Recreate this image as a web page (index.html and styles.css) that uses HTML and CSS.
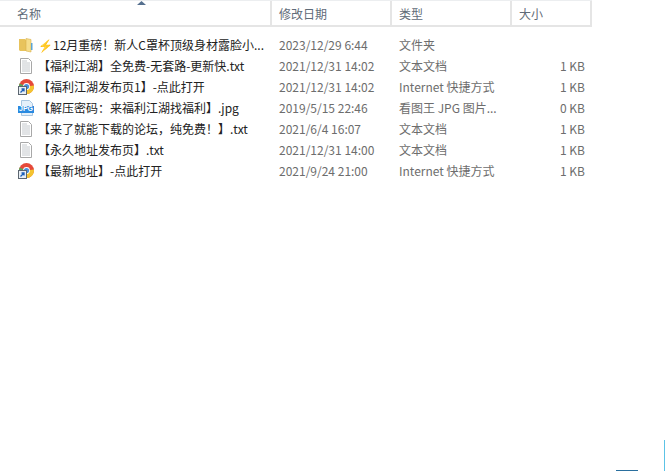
FILE: index.html
```html
<!DOCTYPE html>
<html lang="zh-CN">
<head>
  <meta charset="UTF-8">
  <meta name="viewport" content="width=device-width, initial-scale=1.0">
  <title>文件列表</title>
  <link rel="stylesheet" href="styles.css">
</head>
<body>
  <svg width="0" height="0" class="defs">
    <symbol id="ico-folder" viewBox="0 0 16 16">
      <path d="M1 2h6l1 1v11H2l-1-1z" fill="#e8c35c"/>
      <path d="M8 1.5l5 1V15l-5-1z" fill="#f6dd8a" stroke="#d9b04a" stroke-width=".6"/>
      <path d="M13 6h1.5v7H13z" fill="#5aa5d8"/>
    </symbol>
    <symbol id="ico-txt" viewBox="0 0 16 16">
      <path d="M2.5.5h8l3 3v12h-11z" fill="#fff" stroke="#a8a8a8"/>
      <path d="M4 5h8M4 7h8M4 9h8M4 11h8M4 13h8" stroke="#c4c8cc"/>
      <path d="M4 3h5" stroke="#c4c8cc"/>
    </symbol>
    <symbol id="ico-link" viewBox="0 0 16 16">
      <circle cx="8.5" cy="7.5" r="7.5" fill="#e5493a"/>
      <path d="M8.5 7.5L15.9 6.4A7.5 7.5 0 0 1 7 14.9z" fill="#f4c430"/>
      <path d="M8.5 7.5L7 14.9A7.5 7.5 0 0 1 1.6 4.6z" fill="#5aa35a"/>
      <circle cx="8.5" cy="7.5" r="3.4" fill="#fff"/>
      <circle cx="8.5" cy="7.5" r="2.6" fill="#4a8fdc"/>
      <rect x="0.5" y="7.5" width="8" height="8" fill="#e8eef4" stroke="#5c6670"/>
      <path d="M2.5 13.5l3-3M3.5 10h2.5v2.5" fill="none" stroke="#1c5fb8" stroke-width="1.3"/>
    </symbol>
    <symbol id="ico-jpg" viewBox="0 0 16 16">
      <path d="M3.5.5h8l3 3v12h-11z" fill="#e4f0fa" stroke="#a9c6e0"/>
      <rect x="0" y="6" width="16" height="7" fill="#2a8ae0"/>
    </symbol>
  </svg>

  <div class="list">
    <div class="head">
      <svg class="sort" width="9" height="4" viewBox="0 0 9 4"><path d="M0 4L4.500 0 9 4z" fill="#56708f"/></svg>
      <div class="col c-name">名称</div>
      <div class="col c-date">修改日期</div>
      <div class="col c-type">类型</div>
      <div class="col c-size">大小</div>
    </div>

    <div class="rows">
      <div class="row">
        <div class="c-name name"><svg class="ico"><use href="#ico-folder"/></svg><span>⚡12月重磅！新人C罩杯顶级身材露脸小...</span></div>
        <div class="c-date">2023/12/29 6:44</div>
        <div class="c-type">文件夹</div>
        <div class="c-size"></div>
      </div>
      <div class="row">
        <div class="c-name name"><svg class="ico"><use href="#ico-txt"/></svg><span>【福利江湖】全免费-无套路-更新快.txt</span></div>
        <div class="c-date">2021/12/31 14:02</div>
        <div class="c-type">文本文档</div>
        <div class="c-size">1 KB</div>
      </div>
      <div class="row">
        <div class="c-name name"><svg class="ico"><use href="#ico-link"/></svg><span>【福利江湖发布页1】-点此打开</span></div>
        <div class="c-date">2021/12/31 14:02</div>
        <div class="c-type">Internet 快捷方式</div>
        <div class="c-size">1 KB</div>
      </div>
      <div class="row">
        <div class="c-name name"><svg class="ico"><use href="#ico-jpg"/></svg><span class="jpg-tag">JPG</span><span>【解压密码：来福利江湖找福利】.jpg</span></div>
        <div class="c-date">2019/5/15 22:46</div>
        <div class="c-type">看图王 JPG 图片...</div>
        <div class="c-size">0 KB</div>
      </div>
      <div class="row">
        <div class="c-name name"><svg class="ico"><use href="#ico-txt"/></svg><span>【来了就能下载的论坛，纯免费！】.txt</span></div>
        <div class="c-date">2021/6/4 16:07</div>
        <div class="c-type">文本文档</div>
        <div class="c-size">1 KB</div>
      </div>
      <div class="row">
        <div class="c-name name"><svg class="ico"><use href="#ico-txt"/></svg><span>【永久地址发布页】.txt</span></div>
        <div class="c-date">2021/12/31 14:00</div>
        <div class="c-type">文本文档</div>
        <div class="c-size">1 KB</div>
      </div>
      <div class="row">
        <div class="c-name name"><svg class="ico"><use href="#ico-link"/></svg><span>【最新地址】-点此打开</span></div>
        <div class="c-date">2021/9/24 21:00</div>
        <div class="c-type">Internet 快捷方式</div>
        <div class="c-size">1 KB</div>
      </div>
    </div>
  </div>

  <div class="edge-right"></div>
  <div class="edge-bottom"></div>
</body>
</html>
```

FILE: styles.css
```css
* {
  margin: 0;
  padding: 0;
  box-sizing: border-box;
}

body {
  width: 665px;
  height: 471px;
  background: #fff;
  font-family: "Noto Sans CJK SC", "Liberation Sans", sans-serif;
  font-size: 12px;
  color: #6d6d6d;
  overflow: hidden;
  position: relative;
}

.defs {
  position: absolute;
}

.list {
  width: 592px;
}

.head {
  display: flex;
  height: 27px;
  border-top: 1px solid #eceef0;
  border-bottom: 2px solid #e5e5e5;
  position: relative;
}

.sort {
  position: absolute;
  left: 137px;
  top: 0;
}

.col {
  display: flex;
  align-items: center;
  padding-left: 7px;
  border-right: 2px solid #e5e5e5;
  color: #5f6b78;
  font-size: 12px;
}

.c-name {
  width: 272px;
}

.col.c-name {
  padding-left: 17px;
}

.c-date,
.c-type {
  width: 120px;
}

.c-size {
  width: 80px;
}

.rows {
  padding-top: 7px;
}

.row {
  display: flex;
  align-items: center;
  height: 21px;
}

.row .c-date,
.row .c-type {
  padding-left: 7px;
}

.row .c-size {
  text-align: right;
  padding-right: 7px;
}

.name {
  display: flex;
  align-items: center;
  color: #222;
  padding-left: 18px;
  position: relative;
  white-space: nowrap;
}

.ico {
  width: 16px;
  height: 16px;
  flex: none;
  margin-right: 4px;
}

.jpg-tag {
  position: absolute;
  left: 18px;
  top: 6px;
  width: 16px;
  font: bold 7px/8px "Liberation Sans", sans-serif;
  color: #fff;
  text-align: center;
}

.edge-right {
  position: absolute;
  right: 0;
  top: 440px;
  bottom: 0;
  width: 1px;
  background: #5cc3e6;
}

.edge-bottom {
  position: absolute;
  left: 616px;
  bottom: 0;
  width: 22px;
  height: 1px;
  background: #2a6f9e;
}
```
